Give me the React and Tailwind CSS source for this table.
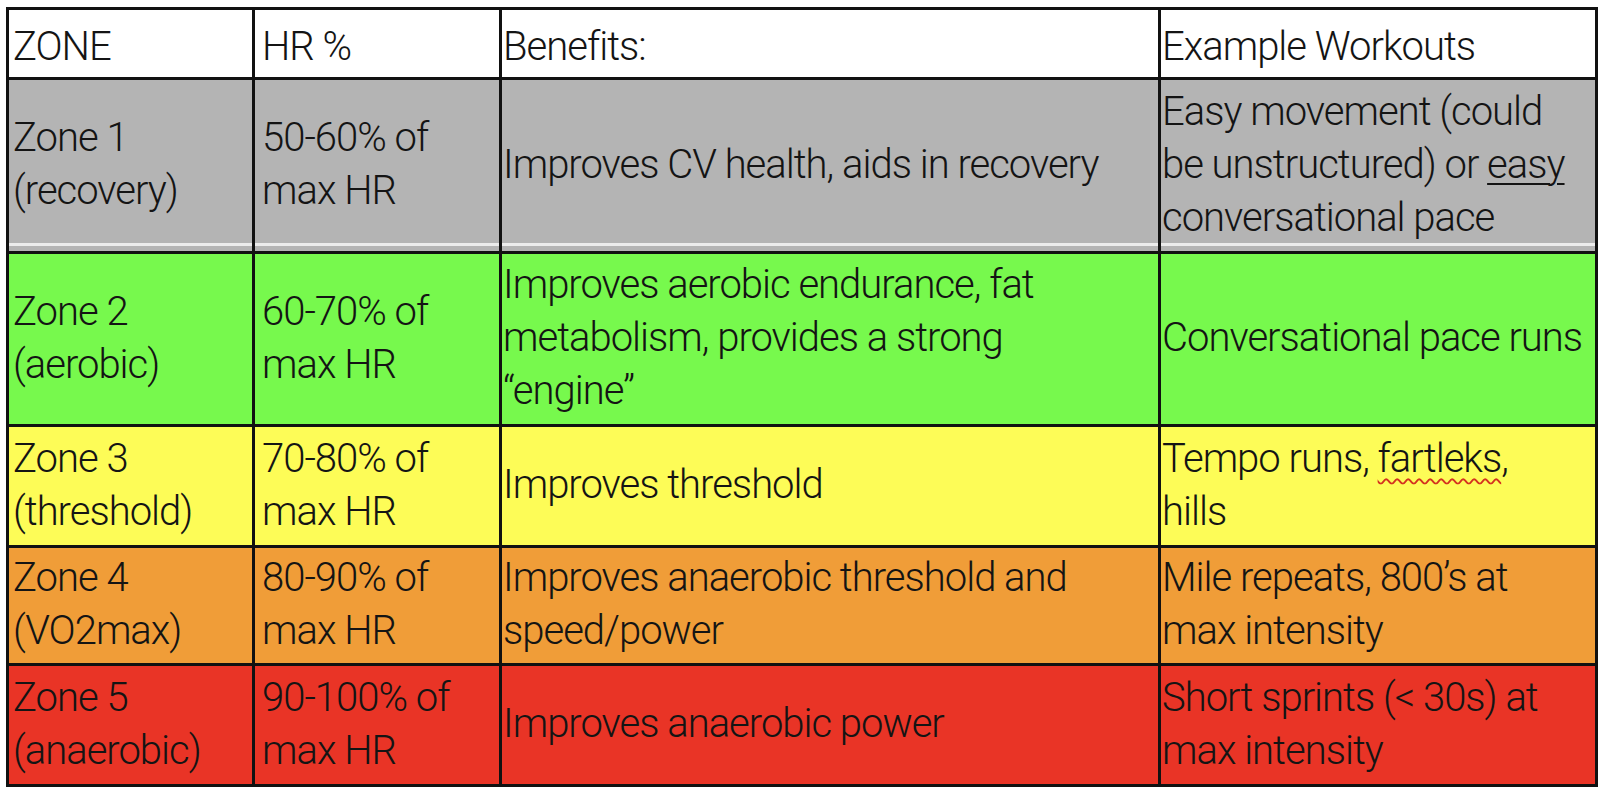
import React from "react";

const rows = [
  {
    bg: "bg-[#b4b4b4]",
    gray: true,
    zone: ["Zone 1", "(recovery)"],
    hr: ["50-60% of", "max HR"],
    ben: ["Improves CV health, aids in recovery"],
    ex: [
      "Easy movement (could",
      <>be unstructured) or <span className="underline decoration-[2px] underline-offset-[5px]">easy</span></>,
      "conversational pace",
    ],
  },
  {
    bg: "bg-[#77f94d]",
    zone: ["Zone 2", "(aerobic)"],
    hr: ["60-70% of", "max HR"],
    ben: ["Improves aerobic endurance, fat", "metabolism, provides a strong", "\u201cengine\u201d"],
    ex: ["Conversational pace runs"],
  },
  {
    bg: "bg-[#fdfc57]",
    zone: ["Zone 3", "(threshold)"],
    hr: ["70-80% of", "max HR"],
    ben: ["Improves threshold"],
    ex: [
      <>Tempo runs, <span className="underline decoration-wavy decoration-[#d4321f] decoration-[1.5px] underline-offset-[6px]">fartleks</span>,</>,
      "hills",
    ],
  },
  {
    bg: "bg-[#f09d38]",
    zone: ["Zone 4", "(VO2max)"],
    hr: ["80-90% of", "max HR"],
    ben: ["Improves anaerobic threshold and", "speed/power"],
    ex: ["Mile repeats, 800\u2019s at", "max intensity"],
  },
  {
    bg: "bg-[#e93426]",
    zone: ["Zone 5", "(anaerobic)"],
    hr: ["90-100% of", "max HR"],
    ben: ["Improves anaerobic power"],
    ex: ["Short sprints (< 30s) at", "max intensity"],
  },
];

const pads = ["pl-[4px]", "pl-[7px]", "pl-[1px]", "pl-[1px]"];

function Cell({ bg, gray, lines, col, head }) {
  return (
    <div
      className={`${bg} ${pads[col]} ${head ? "pt-[6px]" : "pb-[3px]"} flex flex-col justify-center whitespace-nowrap overflow-hidden ${
        gray ? "shadow-[inset_0_-5px_0_#b4b4b4,inset_0_-8px_0_#ececec]" : ""
      }`}
    >
      {lines.map((l, i) => (
        <div key={i}>{l}</div>
      ))}
    </div>
  );
}

export default function App() {
  return (
    <div className="w-[1600px] h-[794px] bg-white pt-[7px] pl-[6px] font-[family-name:Roboto,sans-serif] font-light text-[40px] tracking-[-1px] leading-[53px] text-[#141414]">
      <div className="inline-grid bg-[#111] p-[3px] gap-[3px] grid-cols-[243px_244px_656px_434px] grid-rows-[67px_171px_170px_118px_115px_118px]">
        <Cell bg="bg-white" head col={0} lines={["ZONE"]} />
        <Cell bg="bg-white" head col={1} lines={["HR %"]} />
        <Cell bg="bg-white" head col={2} lines={["Benefits:"]} />
        <Cell bg="bg-white" head col={3} lines={["Example Workouts"]} />
        {rows.map((r, i) => (
          <React.Fragment key={i}>
            <Cell bg={r.bg} gray={r.gray} col={0} lines={r.zone} />
            <Cell bg={r.bg} gray={r.gray} col={1} lines={r.hr} />
            <Cell bg={r.bg} gray={r.gray} col={2} lines={r.ben} />
            <Cell bg={r.bg} gray={r.gray} col={3} lines={r.ex} />
          </React.Fragment>
        ))}
      </div>
    </div>
  );
}
